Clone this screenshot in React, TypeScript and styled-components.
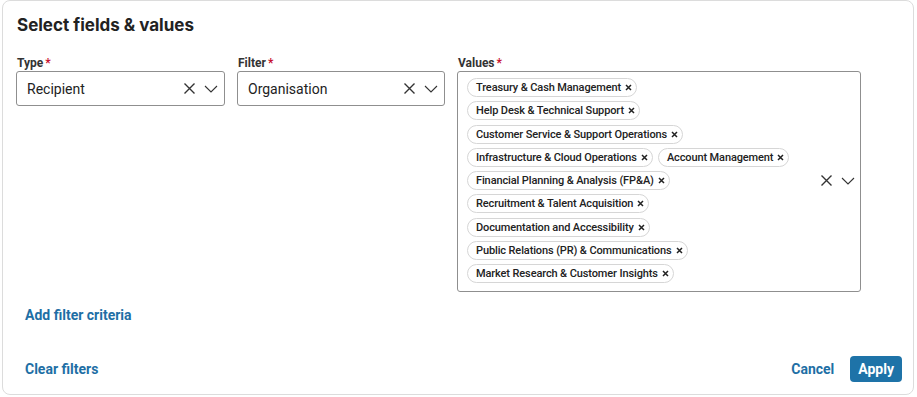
import styled, { createGlobalStyle } from 'styled-components'

const GlobalStyle = createGlobalStyle`
  html, body {
    margin: 0;
    padding: 0;
    background: #fff;
    font-family: Roboto, "Liberation Sans", Arial, sans-serif;
    color: #222;
  }
`

const Card = styled.div`
  box-sizing: border-box;
  width: 912px;
  height: 395px;
  margin-left: 2px;
  border: 1px solid #dcdcdc;
  border-radius: 8px;
  padding: 13px 11px 0 13px;
  display: flex;
  flex-direction: column;
`

const Title = styled.h2`
  margin: 0 0 20px 1px;
  font-family: Inter, "Open Sans", sans-serif;
  font-weight: 700;
  font-size: 17px;
  line-height: 22px;
  color: #222;
`

const Fields = styled.div`
  display: grid;
  grid-template-columns: 209px 208px 404px;
  column-gap: 12px;
  align-items: start;
`

const Field = styled.div`
  display: flex;
  flex-direction: column;
`

const Label = styled.label`
  font-size: 12px;
  font-weight: 700;
  line-height: 14px;
  color: #333;
  margin: 0 0 1px 1px;

  span {
    color: #c8102e;
    margin-left: 2px;
  }
`

const SelectBox = styled.div<{ $tall?: boolean }>`
  box-sizing: border-box;
  border: 1px solid #8f8f8f;
  border-radius: 3px;
  min-height: 35px;
  display: flex;
  align-items: center;
  padding: ${(p) => (p.$tall ? '6px 5px 8px 9px' : '0 6px 0 10px')};
`

const SelectValue = styled.div`
  flex: 1;
  font-size: 14px;
  color: #222;
`

const ChipList = styled.div`
  flex: 1;
  display: flex;
  flex-wrap: wrap;
  align-items: center;
  row-gap: 4.3px;
  column-gap: 5px;
  max-width: 330px;
`

const Chip = styled.div`
  box-sizing: border-box;
  height: 19px;
  display: inline-flex;
  align-items: center;
  gap: 4px;
  padding: 0 4px 0 8px;
  border: 1px solid #d6d6d6;
  border-radius: 10px;
  font-size: 11px;
  font-weight: 500;
  letter-spacing: -0.12px;
  color: #222;
  white-space: nowrap;
`

const Controls = styled.div`
  display: flex;
  align-items: center;
  gap: 8px;
  margin-left: auto;
  color: #333;
`

const LinkButton = styled.button`
  background: none;
  border: 0;
  padding: 0;
  font-family: Roboto, "Liberation Sans", Arial, sans-serif;
  font-size: 14px;
  font-weight: 700;
  color: #1e6fa5;
  cursor: pointer;
`

const AddRow = styled.div`
  margin: 13px 0 0 9px;
`

const Footer = styled.div`
  margin-top: auto;
  height: 51px;
  display: flex;
  align-items: center;
  justify-content: space-between;
  padding-left: 9px;
`

const Actions = styled.div`
  display: flex;
  align-items: center;
  gap: 16px;
`

const ApplyButton = styled.button`
  height: 26px;
  padding: 0 8px;
  border: 0;
  border-radius: 4px;
  background: #1e73a8;
  color: #fff;
  font-family: Roboto, "Liberation Sans", Arial, sans-serif;
  font-size: 14px;
  font-weight: 700;
  cursor: pointer;
`

const CloseIcon = () => (
  <svg width="13" height="13" viewBox="0 0 13 13" fill="none" stroke="currentColor" strokeWidth="1.4">
    <path d="M1.5 1.5 L11.5 11.5 M11.5 1.5 L1.5 11.5" />
  </svg>
)

const ChevronIcon = () => (
  <svg width="14" height="8" viewBox="0 0 14 8" fill="none" stroke="currentColor" strokeWidth="1.1">
    <path d="M1 1 L7 7 L13 1" />
  </svg>
)

const ChipX = () => (
  <svg width="7" height="7" viewBox="0 0 7 7" fill="none" stroke="#222" strokeWidth="1.5">
    <path d="M1 1 L6 6 M6 1 L1 6" />
  </svg>
)

const values = [
  'Treasury & Cash Management',
  'Help Desk & Technical Support',
  'Customer Service & Support Operations',
  'Infrastructure & Cloud Operations',
  'Account Management',
  'Financial Planning & Analysis (FP&A)',
  'Recruitment & Talent Acquisition',
  'Documentation and Accessibility',
  'Public Relations (PR) & Communications',
  'Market Research & Customer Insights',
]

const App = () => {
  return (
    <>
      <GlobalStyle />
      <Card>
        <Title>Select fields &amp; values</Title>
        <Fields>
          <Field>
            <Label>
              Type<span>*</span>
            </Label>
            <SelectBox>
              <SelectValue>Recipient</SelectValue>
              <Controls>
                <CloseIcon />
                <ChevronIcon />
              </Controls>
            </SelectBox>
          </Field>
          <Field>
            <Label>
              Filter<span>*</span>
            </Label>
            <SelectBox>
              <SelectValue>Organisation</SelectValue>
              <Controls>
                <CloseIcon />
                <ChevronIcon />
              </Controls>
            </SelectBox>
          </Field>
          <Field>
            <Label>
              Values<span>*</span>
            </Label>
            <SelectBox $tall>
              <ChipList>
                {values.map((v) => (
                  <Chip key={v}>
                    {v}
                    <ChipX />
                  </Chip>
                ))}
              </ChipList>
              <Controls>
                <CloseIcon />
                <ChevronIcon />
              </Controls>
            </SelectBox>
          </Field>
        </Fields>
        <AddRow>
          <LinkButton>Add filter criteria</LinkButton>
        </AddRow>
        <Footer>
          <LinkButton>Clear filters</LinkButton>
          <Actions>
            <LinkButton>Cancel</LinkButton>
            <ApplyButton>Apply</ApplyButton>
          </Actions>
        </Footer>
      </Card>
    </>
  )
}

export default App
